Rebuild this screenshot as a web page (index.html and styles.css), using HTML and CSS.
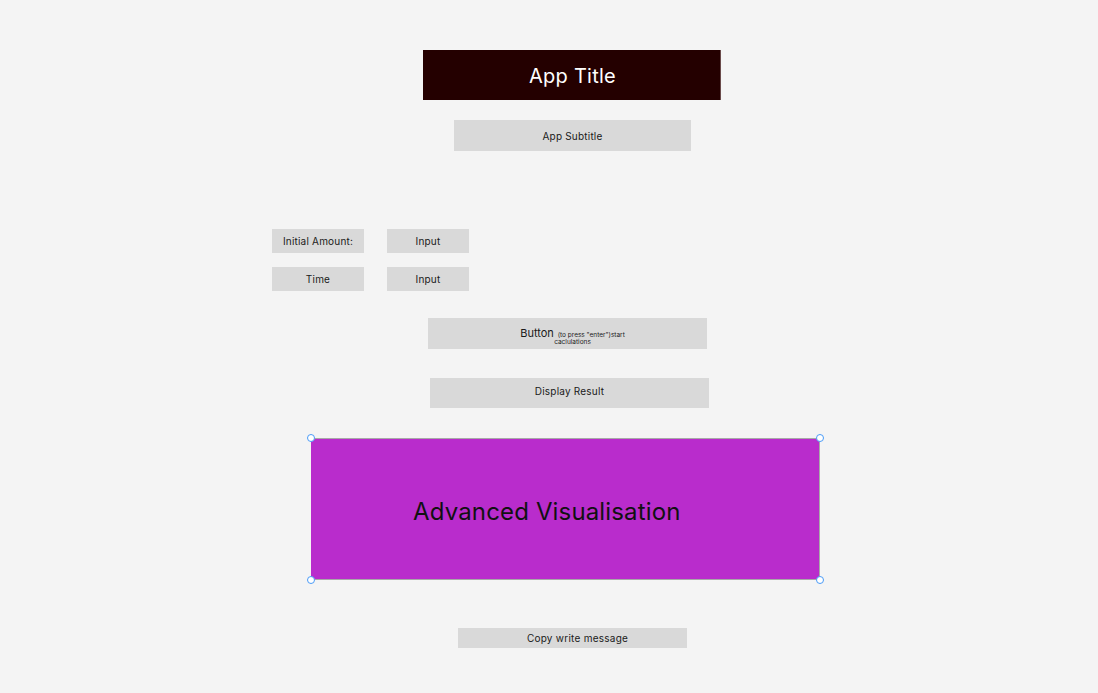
FILE: index.html
```html
<!DOCTYPE html>
<html>
<head>
<meta charset="utf-8">
<link rel="stylesheet" href="styles.css">
</head>
<body>
<main class="page">
  <div class="title">App Title</div>
  <div class="subtitle">App Subtitle</div>
  <div class="form">
    <div class="row">
      <div class="label">Initial Amount:</div>
      <div class="input">Input</div>
    </div>
    <div class="row row2">
      <div class="label">Time</div>
      <div class="input">Input</div>
    </div>
  </div>
  <div class="button"><span class="btn-text"><span class="btn-main">Button</span> <span class="btn-note">(to press "enter")start caclulations</span></span></div>
  <div class="result">Display Result</div>
  <div class="viz">
    <span class="viz-text">Advanced Visualisation</span>
    <span class="handle h-tl"></span>
    <span class="handle h-tr"></span>
    <span class="handle h-bl"></span>
    <span class="handle h-br"></span>
  </div>
  <div class="copy">Copy write message</div>
</main>
</body>
</html>
```
FILE: styles.css
```css
html, body {
  margin: 0;
  padding: 0;
  background: #f4f4f4;
  font-family: Inter, "Noto Sans", sans-serif;
  color: #1a1a1a;
}
.page {
  padding-top: 50px;
  display: flex;
  flex-direction: column;
  align-items: flex-start;
}
.title {
  margin-left: 423px;
  width: 298px;
  height: 50px;
  background: #240000;
  border-right: 1px solid #6a4a4a;
  box-sizing: border-box;
  color: #ffffff;
  font-size: 20px;
  letter-spacing: 0.25px;
  display: flex;
  align-items: center;
  justify-content: center;
  padding-left: 2px;
  padding-top: 2px;
}
.subtitle {
  margin-top: 20px;
  margin-left: 454px;
  width: 237px;
  height: 31px;
  background: #d9d9d9;
  font-size: 10px;
  letter-spacing: 0.2px;
  display: flex;
  align-items: center;
  justify-content: center;
}
.form {
  margin-top: 78px;
  margin-left: 272px;
  display: flex;
  flex-direction: column;
  gap: 14px;
}
.row {
  display: flex;
  gap: 23px;
}
.label, .input {
  height: 24px;
  background: #d9d9d9;
  font-size: 10px;
  letter-spacing: 0.2px;
  display: flex;
  align-items: center;
  justify-content: center;
}
.label { width: 92px; }
.input { width: 82px; }
.button {
  margin-top: 27px;
  margin-left: 428px;
  width: 279px;
  height: 31px;
  background: #d9d9d9;
  display: flex;
  align-items: center;
  justify-content: center;
}
.btn-text {
  width: 112px;
  margin-left: 10px;
  padding-top: 11px;
  text-align: center;
  font-size: 6.5px;
  line-height: 7px;
}
.btn-main { font-size: 11px; line-height: 0; margin-right: 2px; }
.btn-note { font-size: 6.5px; }
.result {
  margin-top: 29px;
  margin-left: 430px;
  width: 279px;
  height: 30px;
  box-sizing: border-box;
  padding-bottom: 4px;
  background: #d9d9d9;
  font-size: 10px;
  letter-spacing: 0.2px;
  display: flex;
  align-items: center;
  justify-content: center;
}
.viz {
  position: relative;
  margin-top: 30px;
  margin-left: 311px;
  width: 509px;
  height: 142px;
  box-sizing: border-box;
  background: #b92ccc;
  border: 1px solid #a8a8a8;
  border-left-color: #b92ccc;
  display: flex;
  align-items: center;
}
.viz-text {
  margin-left: 101px;
  margin-top: 4px;
  font-size: 24px;
  letter-spacing: 0.15px;
  color: #111111;
}
.handle {
  position: absolute;
  width: 6px;
  height: 6px;
  border-radius: 50%;
  background: #ffffff;
  border: 1px solid #4a9bf7;
}
.h-tl { left: -5px; top: -5px; }
.h-tr { right: -5px; top: -5px; }
.h-bl { left: -5px; bottom: -5px; }
.h-br { right: -5px; bottom: -5px; }
.copy {
  margin-top: 48px;
  margin-left: 458px;
  width: 229px;
  height: 20px;
  background: #d9d9d9;
  font-size: 10px;
  letter-spacing: 0.25px;
  display: flex;
  align-items: center;
  justify-content: center;
  padding-left: 10px;
  box-sizing: border-box;
}
```
